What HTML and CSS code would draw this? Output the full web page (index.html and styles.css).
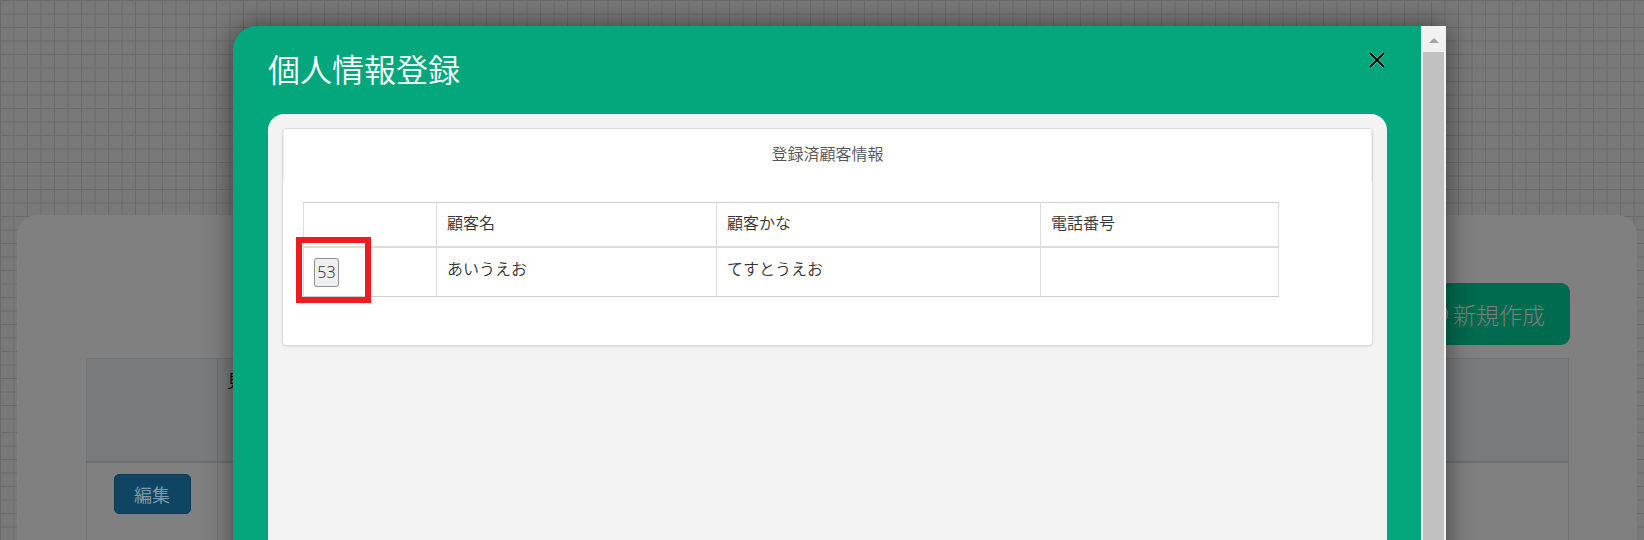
FILE: index.html
```html
<!DOCTYPE html>
<html lang="ja">
<head>
<meta charset="utf-8">
<title>個人情報登録</title>
<link rel="stylesheet" href="styles.css">
</head>
<body>
  <div class="page">
    <div class="panel">
      <div class="panel-actions">
        <button class="btn-new" type="button"><svg class="btn-new-icon" width="20" height="20" viewBox="0 0 20 20"><circle cx="10" cy="10" r="8.5" stroke="#7f7f7f" stroke-width="1.6" fill="none"/><path d="M10 5 V15 M5 10 H15" stroke="#7f7f7f" stroke-width="1.6"/></svg>新規作成</button>
      </div>
      <table class="list">
        <colgroup><col class="c-act"><col></colgroup>
        <thead>
          <tr><th></th><th>見積日</th></tr>
        </thead>
        <tbody>
          <tr><td><button class="btn-edit" type="button">編集</button></td><td></td></tr>
        </tbody>
      </table>
    </div>
  </div>

  <div class="modal">
    <div class="modal-main">
      <div class="modal-head">
        <h1 class="modal-title">個人情報登録</h1>
        <button class="modal-close" type="button" aria-label="閉じる">
          <svg width="16" height="16" viewBox="0 0 16 16"><path d="M1 1 L15 15 M15 1 L1 15" stroke="#ffffff" stroke-opacity="0.5" stroke-width="3" fill="none"/><path d="M1 1 L15 15 M15 1 L1 15" stroke="#000" stroke-width="1.8" fill="none"/></svg>
        </button>
      </div>
      <div class="modal-body">
        <div class="card">
          <div class="card-head">登録済顧客情報</div>
          <div class="card-body">
            <table class="customers">
              <colgroup>
                <col class="w1"><col class="w2"><col class="w3"><col class="w4">
              </colgroup>
              <thead>
                <tr><th></th><th>顧客名</th><th>顧客かな</th><th>電話番号</th></tr>
              </thead>
              <tbody>
                <tr>
                  <td><button class="num" type="button">53</button></td>
                  <td>あいうえお</td>
                  <td>てすとうえお</td>
                  <td></td>
                </tr>
              </tbody>
            </table>
          </div>
        </div>
      </div>
    </div>
    <div class="vscroll">
      <span class="vscroll-up"></span>
      <span class="vscroll-thumb"></span>
    </div>
  </div>

  <div class="highlight"></div>
</body>
</html>
```

FILE: styles.css
```css
html, body {
  margin: 0;
  padding: 0;
}
body {
  width: 1644px;
  height: 540px;
  overflow: hidden;
  font-family: "Noto Sans CJK JP", "Noto Sans", sans-serif;
  background-color: #797979;
  background-image:
    linear-gradient(to right, #6a6a6a 1px, transparent 1px),
    linear-gradient(to bottom, #6a6a6a 1px, transparent 1px);
  background-size: 13.5px 13.5px;
  position: relative;
}

/* background page (under overlay) */
.page {
  padding: 215px 7px 0 17px;
}
.panel {
  background: #808080;
  border-radius: 20px 20px 0 0;
  height: 340px;
  padding: 68px 68px 0 69px;
}
.panel-actions {
  display: flex;
  justify-content: flex-end;
  margin-right: -1px;
}
.btn-new {
  height: 62px;
  padding: 0 25px 0 22px;
  border: none;
  border-radius: 9px;
  background: #006b4e;
  color: #7f7f7f;
  font-family: "Noto Sans CJK JP", sans-serif;
  font-size: 23px;
  font-weight: 300;
  display: flex;
  align-items: center;
}
.btn-new-icon {
  margin-right: 4px;
}
.list {
  margin-top: 13px;
  width: 100%;
  border-collapse: collapse;
  table-layout: fixed;
}
.list .c-act {
  width: 131px;
}
.list th {
  height: 92px;
  padding: 10px 9px 0;
  text-align: left;
  vertical-align: top;
  font-weight: normal;
  font-size: 18px;
  line-height: 22px;
  color: #111;
  background: #7a7b7d;
  border: 1px solid #717171;
  border-bottom: 2px solid #6f6f6f;
}
.list td {
  height: 80px;
  padding: 11px 0 0;
  vertical-align: top;
  text-align: center;
  border: 1px solid #737373;
}
.btn-edit {
  width: 77px;
  height: 40px;
  border: 1px solid #0b3d58;
  border-radius: 5px;
  background: #0d4563;
  color: #7f9aa8;
  font-family: "Noto Sans CJK JP", sans-serif;
  font-size: 18px;
  padding: 0;
}

/* modal */
.modal {
  position: absolute;
  left: 233px;
  top: 26px;
  width: 1213px;
  height: 560px;
  display: flex;
  background: #04a77b;
  border-radius: 24px 0 0 0;
  box-shadow: 0 0 28px rgba(0, 0, 0, 0.5);
}
.modal-main {
  flex: 1;
  position: relative;
  padding: 0 34px 0 35px;
}
.modal-head {
  padding-top: 22px;
}
.modal-title {
  margin: 0;
  font-size: 32px;
  line-height: 40px;
  font-weight: 350;
  color: #fff;
}
.modal-close {
  position: absolute;
  top: 26px;
  right: 36px;
  width: 16px;
  height: 16px;
  padding: 0;
  border: none;
  background: transparent;
  display: block;
}
.modal-close svg {
  display: block;
}
.modal-body {
  margin-top: 26px;
  background: #f3f3f3;
  border-radius: 16px 16px 0 0;
  padding: 14px;
  height: 500px;
}
.card {
  background: #fff;
  border: 1px solid #dadada;
  border-radius: 4px;
  box-shadow: 0 1px 2px rgba(0, 0, 0, 0.08);
}
.card-head {
  height: 53px;
  box-sizing: border-box;
  padding-bottom: 6px;
  display: flex;
  align-items: center;
  justify-content: center;
  font-size: 16px;
  font-weight: 350;
  color: #555;
  border-left: 1px solid #ececec;
  border-right: 1px solid #ececec;
}
.card-body {
  padding: 20px 20px 48px;
}
.customers {
  width: 975px;
  border-collapse: collapse;
  table-layout: fixed;
  border: 1px solid #cfcfcf;
  color: #333;
  font-size: 16px;
  font-weight: 350;
  line-height: 22px;
}
.customers .w1 { width: 133px; }
.customers .w2 { width: 280px; }
.customers .w3 { width: 324px; }
.customers .w4 { width: 238px; }
.customers th {
  padding: 8px 10px 13px;
  text-align: left;
  font-weight: 350;
  border: 1px solid #dcdcdc;
  border-bottom: 2px solid #dcdcdc;
  border-top-color: #cfcfcf;
}
.customers td {
  padding: 9px 10px 9px;
  vertical-align: top;
  border: 1px solid #dcdcdc;
  border-bottom-color: #cfcfcf;
}
.num {
  display: block;
  box-sizing: border-box;
  width: 25px;
  height: 29px;
  margin-top: 1px;
  padding: 0;
  border: 1px solid #8f8f8f;
  border-radius: 3px;
  background: #efefef;
  color: #333;
  font-family: "Noto Sans", sans-serif;
  font-size: 16px;
  font-weight: 300;
  line-height: 27px;
  text-align: center;
}

/* scrollbar */
.vscroll {
  width: 25px;
  background: #f1f1f1;
  display: flex;
  flex-direction: column;
  align-items: center;
}
.vscroll-up {
  width: 0;
  height: 0;
  margin-top: 12px;
  margin-bottom: 9px;
  border-left: 5.5px solid transparent;
  border-right: 5.5px solid transparent;
  border-bottom: 5px solid #a3a3a3;
}
.vscroll-thumb {
  align-self: stretch;
  flex: 1;
  margin: 0 2px;
  background: #c1c1c1;
}

/* red annotation box */
.highlight {
  position: absolute;
  left: 296px;
  top: 237px;
  width: 75px;
  height: 66px;
  box-sizing: border-box;
  border: 6px solid #ed1c24;
}
```
